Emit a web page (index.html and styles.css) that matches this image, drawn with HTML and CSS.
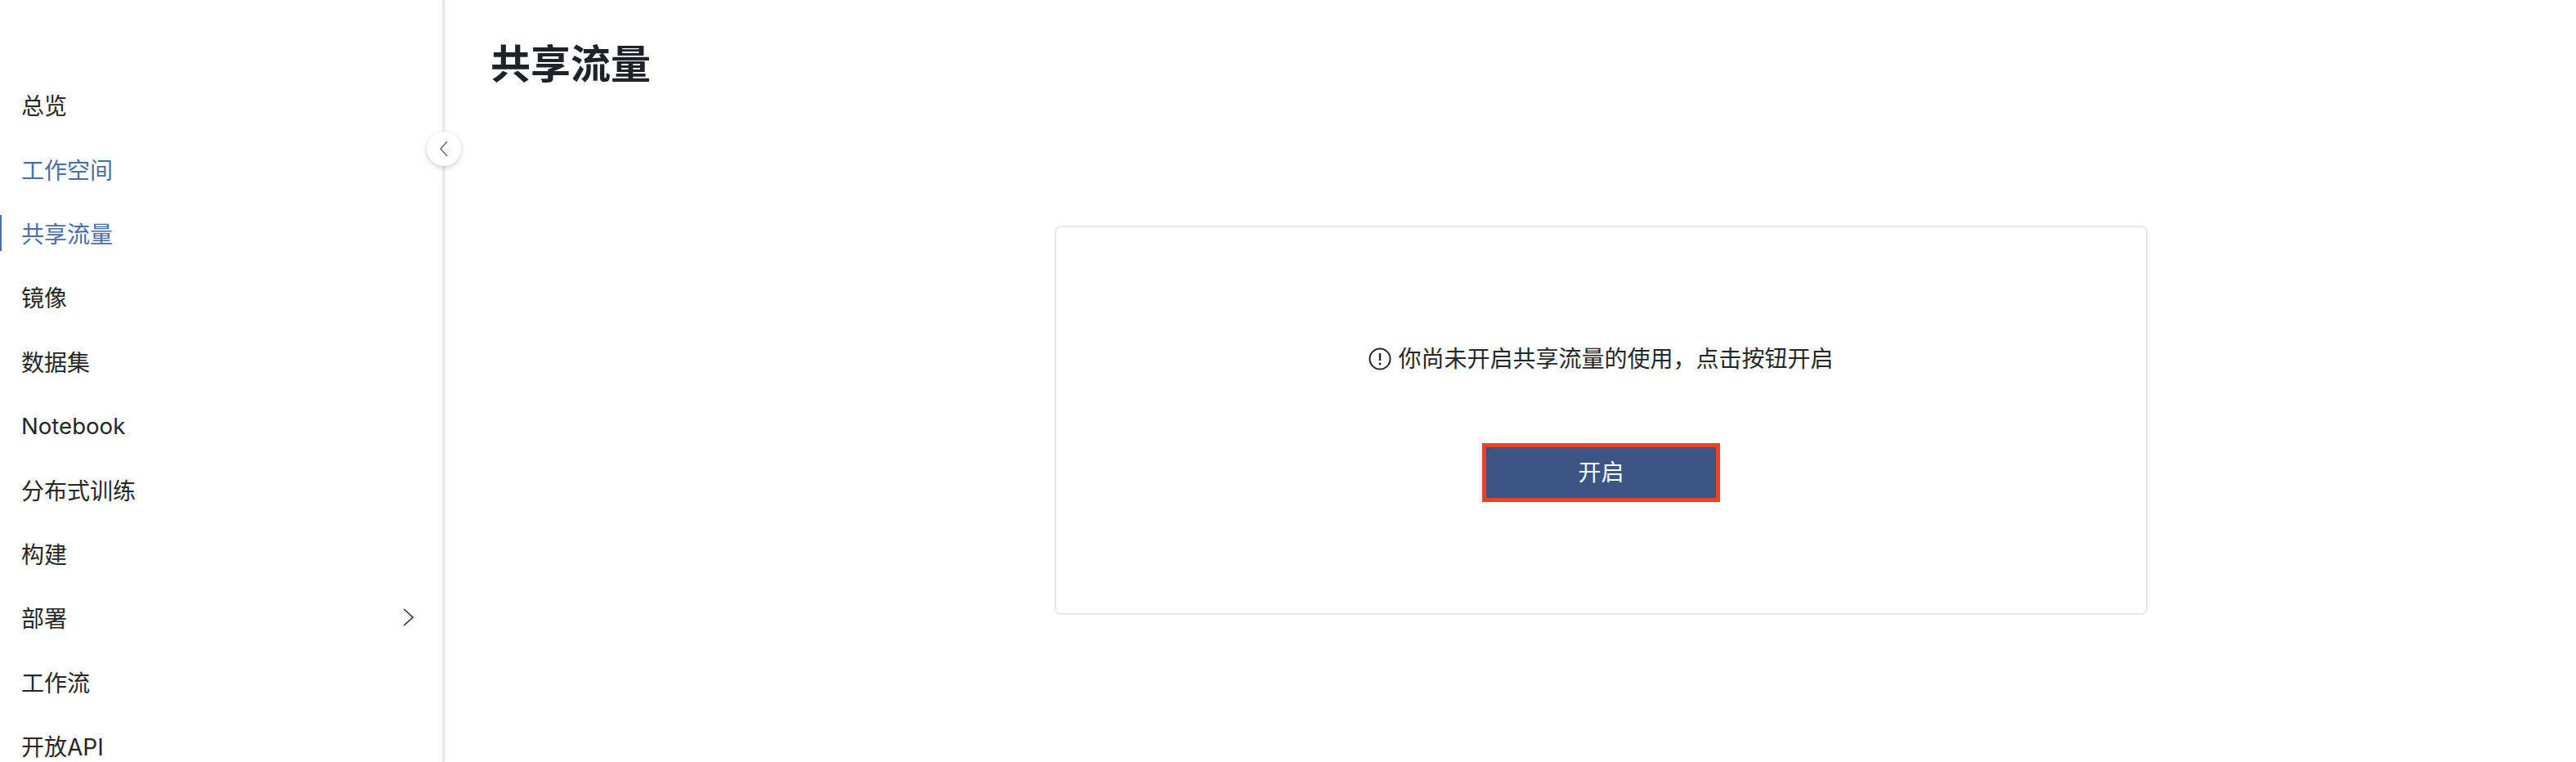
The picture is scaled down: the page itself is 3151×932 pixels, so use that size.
FILE: index.html
```html
<!DOCTYPE html>
<html lang="zh-CN">
<head>
    <meta charset="UTF-8">
    <title>共享流量</title>
    <link rel="stylesheet" href="styles.css">
</head>
<body>
    <div class="layout">
        <aside class="sidebar">
            <nav class="menu">
                <a class="menu-item">总览</a>
                <a class="menu-item open">工作空间</a>
                <a class="menu-item active">共享流量</a>
                <a class="menu-item">镜像</a>
                <a class="menu-item">数据集</a>
                <a class="menu-item latin">Notebook</a>
                <a class="menu-item">分布式训练</a>
                <a class="menu-item">构建</a>
                <a class="menu-item">部署
                    <svg class="arrow" width="13" height="22" viewBox="0 0 13 22"><path d="M1 1l11 10L1 21" fill="none" stroke="#333" stroke-width="1.6"/></svg>
                </a>
                <a class="menu-item">工作流</a>
                <a class="menu-item">开放API</a>
            </nav>
            <button class="collapse" type="button">
                <svg width="10" height="20" viewBox="0 0 10 20"><path d="M9 1L1 10l8 9" fill="none" stroke="#666" stroke-width="1.4"/></svg>
            </button>
        </aside>

        <main class="content">
            <h1 class="title">共享流量</h1>
            <section class="card">
                <p class="notice">
                    <svg class="notice-icon" width="28" height="28" viewBox="0 0 28 28">
                        <circle cx="14" cy="14" r="12.5" fill="none" stroke="#262626" stroke-width="2"/>
                        <path d="M14 7v9" stroke="#262626" stroke-width="2.4"/>
                        <circle cx="14" cy="20" r="1.5" fill="#262626"/>
                    </svg>
                    你尚未开启共享流量的使用，点击按钮开启
                </p>
                <button class="primary" type="button">开启</button>
            </section>
        </main>
    </div>
</body>
</html>
```

FILE: styles.css
```css
* {
    box-sizing: border-box;
}

body {
    margin: 0;
    background: white;
    color: #262626;
    font-family: "Inter", "Noto Sans CJK SC", sans-serif;
    font-size: 28px;
    overflow: hidden;
}

.layout {
    display: flex;
    height: 932px;
    overflow: hidden;
}

.sidebar {
    position: relative;
    flex: 0 0 544px;
    border-right: 3px solid #e8e8e8;
    box-shadow: 2px 0 4px rgba(0, 0, 0, 0.03);
}

.menu {
    display: flex;
    flex-direction: column;
    padding-top: 89px;
}

.menu-item {
    flex: 0 0 78.4px;
    display: flex;
    align-items: center;
    justify-content: space-between;
    position: relative;
    padding: 0 35px 0 26px;
}

.menu-item.latin {
    padding-top: 2px;
    font-size: 27.6px;
}

.menu-item.open,
.menu-item.active {
    color: #4a6ea5;
}

.menu-item.active::before {
    content: "";
    position: absolute;
    left: 0;
    top: 17px;
    width: 2px;
    height: 44px;
    background: #4a6ea5;
}

.collapse {
    position: absolute;
    top: 161px;
    right: -23px;
    width: 42px;
    height: 42px;
    padding: 0;
    display: flex;
    align-items: center;
    justify-content: center;
    border: none;
    border-radius: 50%;
    background: white;
    box-shadow: 0 2px 6px rgba(0, 0, 0, 0.2);
}

.content {
    flex: 1;
    padding: 0 0 0 56px;
}

.title {
    margin: 44px 0 0;
    font-size: 49px;
    line-height: 70px;
    font-weight: 600;
    color: #1f2329;
}

.card {
    width: 1337px;
    height: 476px;
    margin: 162px 0 0 690px;
    border: 2px solid #e8e8e8;
    border-radius: 8px;
    display: flex;
    flex-direction: column;
    align-items: center;
    padding-top: 141px;
}

.notice {
    margin: 0;
    display: flex;
    align-items: center;
    gap: 8px;
    line-height: 40px;
}

.primary {
    width: 291px;
    height: 72px;
    margin-top: 83px;
    padding: 0 0 5px;
    border: 5px solid #ee4227;
    background: #3d5585;
    color: white;
    font-family: inherit;
    font-size: 28px;
}
```
